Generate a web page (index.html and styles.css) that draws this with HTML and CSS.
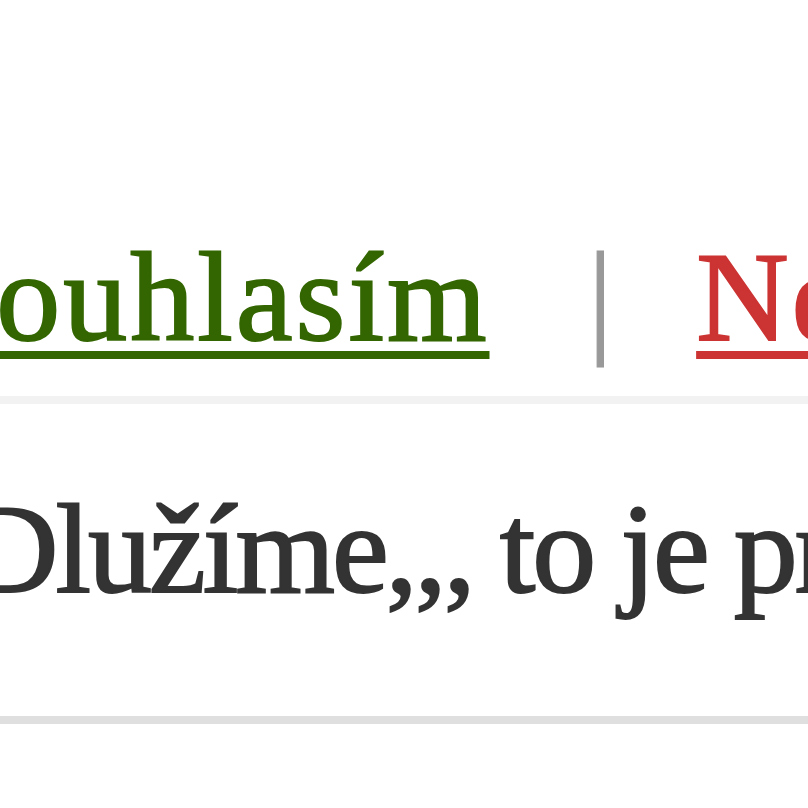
FILE: index.html
```html
<!DOCTYPE html>
<html lang="cs">
<head>
  <meta charset="UTF-8">
  <title>Anketa</title>
  <link rel="stylesheet" href="styles.css">
</head>
<body>
  <div class="vote">
    <a href="#" class="yes">Souhlasím</a><span class="sep">|</span><a href="#" class="no">Nesouhlasím</a>
  </div>
  <div class="comment">
    <p>Dlužíme,,, to je pravda</p>
  </div>
</body>
</html>
```

FILE: styles.css
```css
body {
  margin: 0;
  overflow: hidden;
  font-family: "Liberation Serif", "Times New Roman", serif;
  font-size: 128px;
  color: #333;
  background: #fff;
  -webkit-text-stroke: 2px currentColor;
}

.vote {
  padding: 224px 0 25px;
  margin-left: -78px;
  white-space: nowrap;
  letter-spacing: 3px;
  border-bottom: 8px solid #f2f2f2;
}

.vote a {
  text-decoration: underline;
  text-decoration-thickness: 8px;
  text-underline-offset: 11px;
}

.yes {
  color: #336600;
  text-decoration-color: #447722;
}

.no {
  color: #cc3333;
  text-decoration-color: #d0403a;
}

.sep {
  color: #999;
  margin: 0 80px 0 98px;
  -webkit-text-stroke: 1px currentColor;
}

.comment {
  padding: 72px 0 93px;
  margin-left: -34px;
  white-space: nowrap;
  letter-spacing: -3px;
  word-spacing: -2px;
  border-bottom: 8px solid #dfdfdf;
}

.comment p {
  margin: 0;
}
```
